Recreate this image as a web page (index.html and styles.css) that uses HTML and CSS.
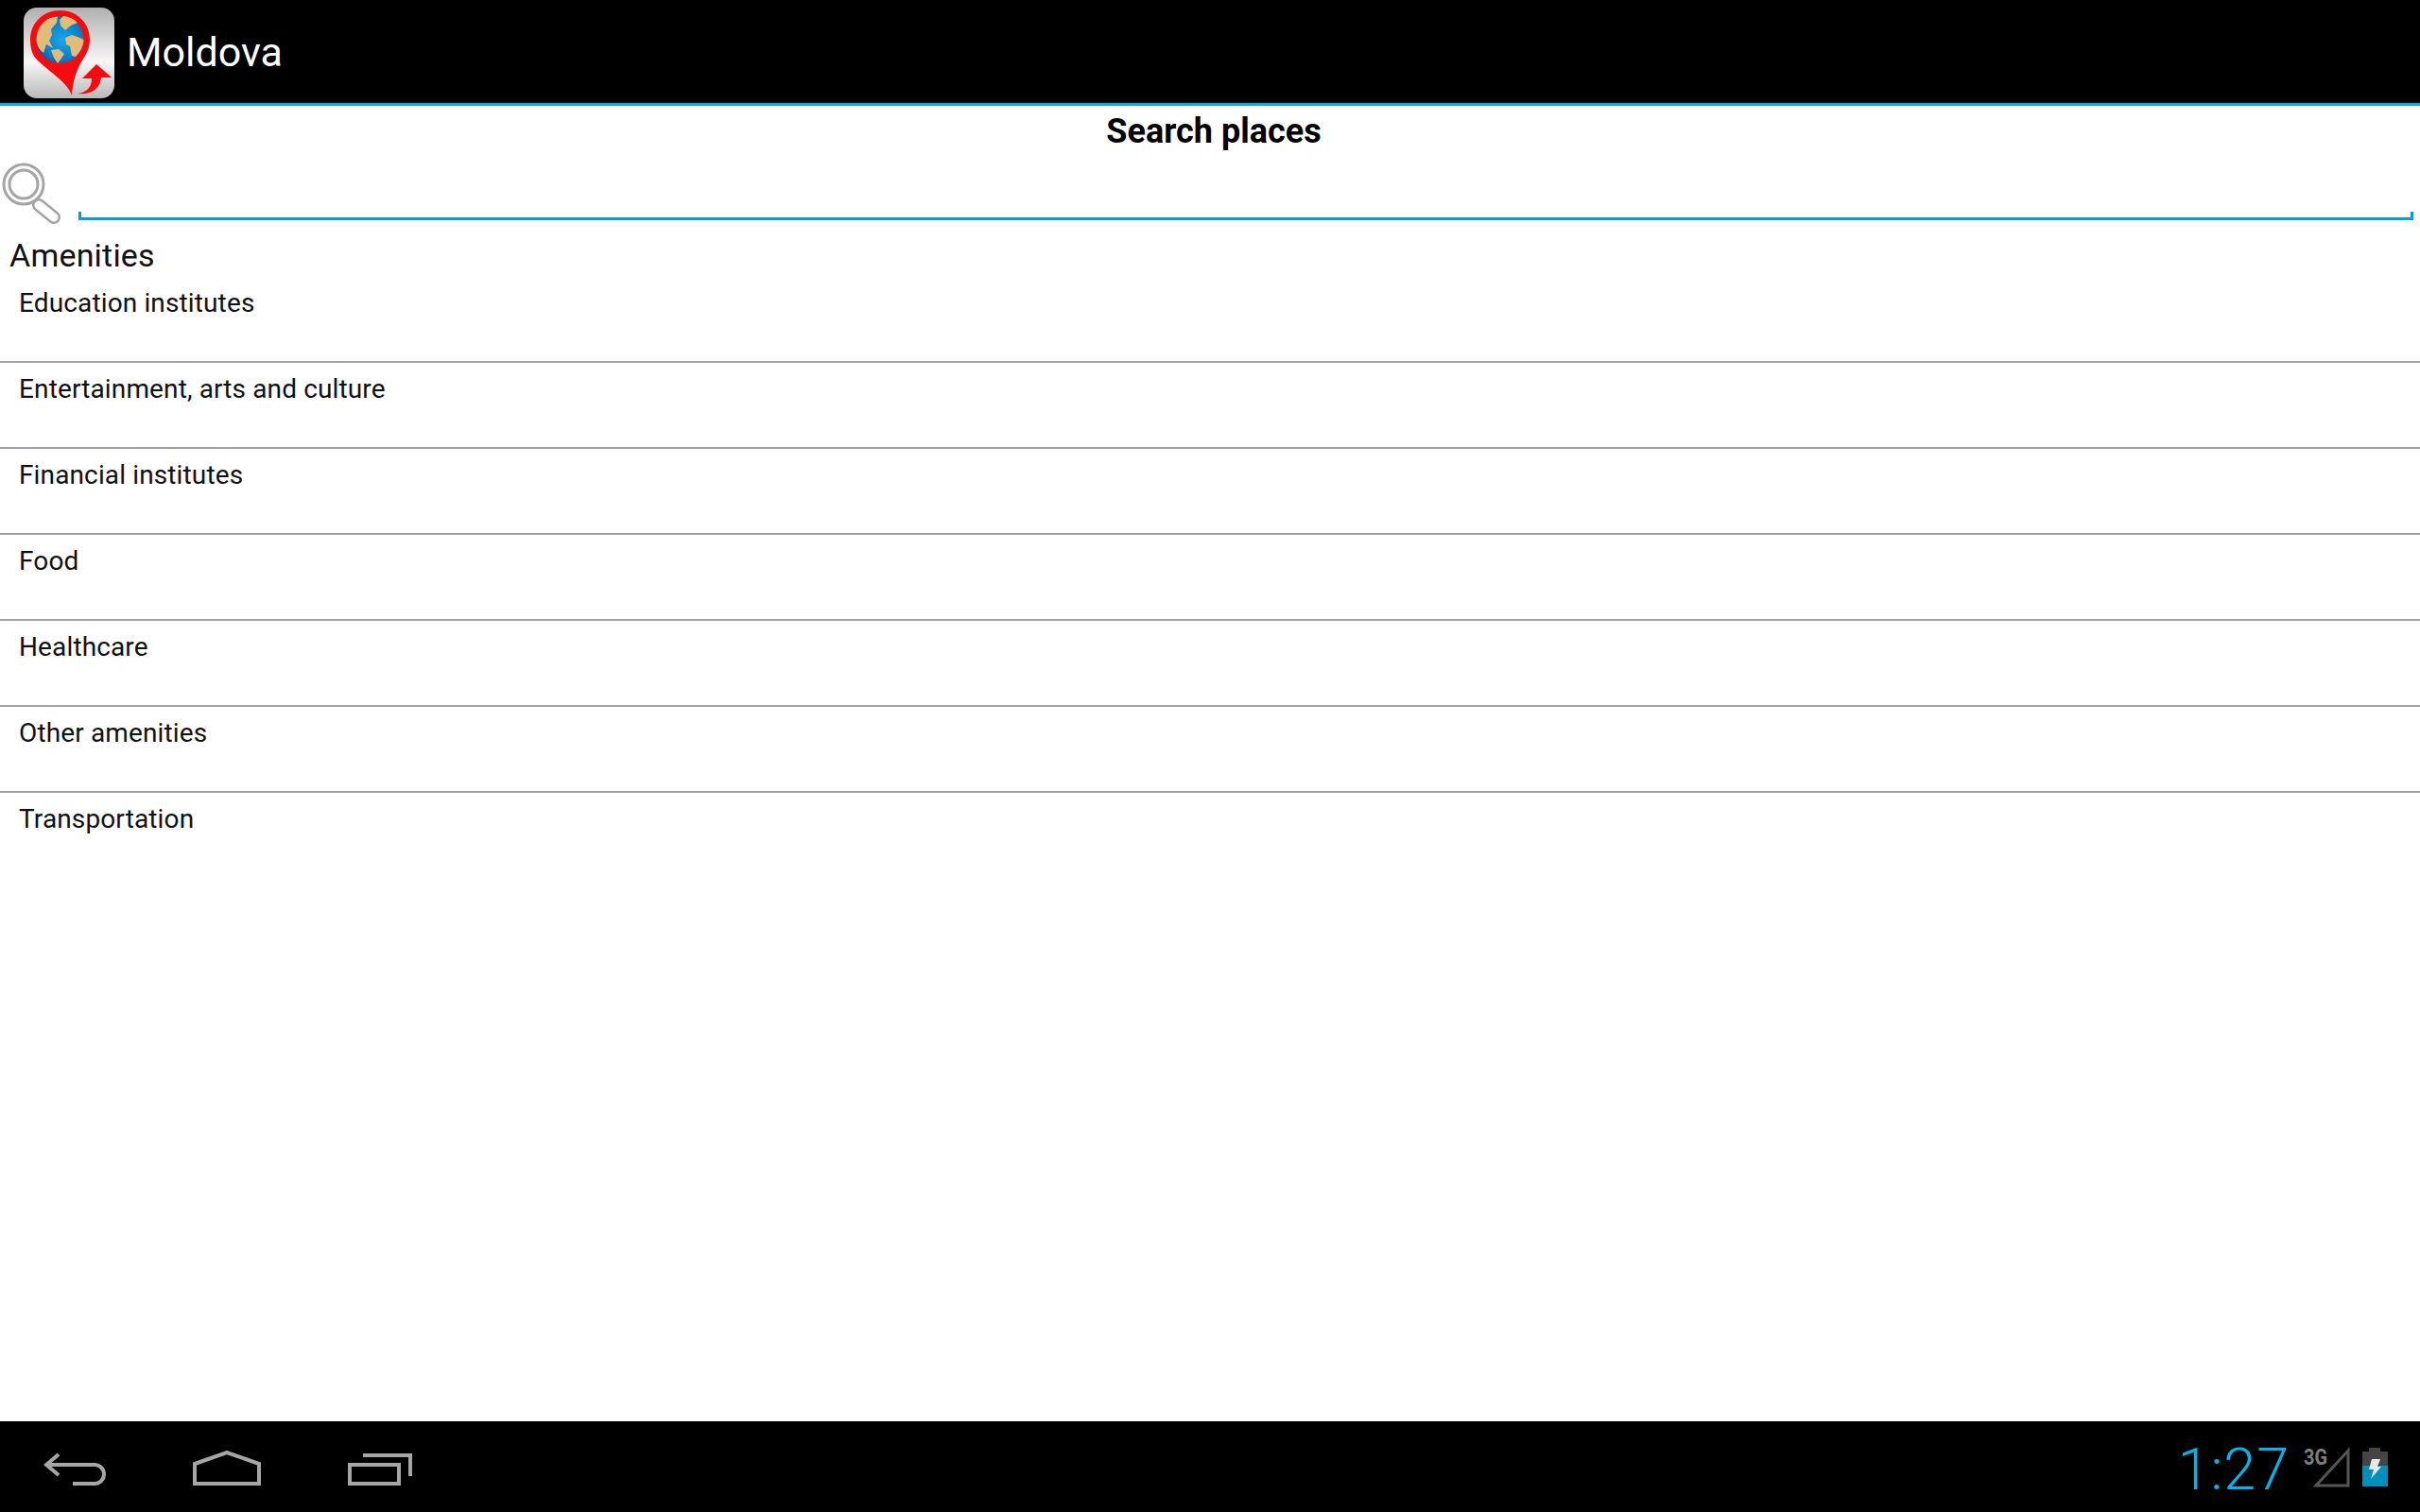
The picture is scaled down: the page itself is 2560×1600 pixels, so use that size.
FILE: index.html
```html
<!DOCTYPE html>
<html lang="en">
<head>
<meta charset="utf-8">
<title>Moldova</title>
<link rel="stylesheet" href="styles.css">
</head>
<body>
<div class="screen">
  <header class="action-bar">
    <svg class="app-icon" viewBox="0 0 96 96" width="96" height="96">
      <defs>
        <linearGradient id="tile" x1="0" y1="0" x2="0" y2="1">
          <stop offset="0" stop-color="#b0b0b0"/>
          <stop offset="0.6" stop-color="#f8f6f6"/>
          <stop offset="1" stop-color="#b9b9b9"/>
        </linearGradient>
        <radialGradient id="sea" cx="0.55" cy="0.5" r="0.6">
          <stop offset="0" stop-color="#18a8e6"/>
          <stop offset="0.7" stop-color="#0b7cc4"/>
          <stop offset="1" stop-color="#044f8e"/>
        </radialGradient>
      </defs>
      <rect x="0" y="0" width="96" height="96" rx="14" fill="url(#tile)"/>
      <path d="M51 93 C46 78 24 66 13 54 C8 48 7 40 7 34 C7 16 21 3 38.500 3 C56 3 70 16 70 34 C70 41 67 49 62 56 C56 66 52 78 51 93Z" fill="#f60c10"/>
      <circle cx="38.500" cy="34" r="25" fill="url(#sea)"/>
      <path d="M13.500 34 C13.500 24 19 15 28 11 L36 9.500 L35 16 L29 23 L30 29 L27 35 L31 43 L24 39 L21 48 C16 44 13.500 39 13.500 34Z" fill="#e3bb78"/>
      <path d="M29 45 L37 44 L43 49 L39 55 L36 59 L32 53Z" fill="#e3bb78"/>
      <path d="M44 32 L51 29 L57 31 L63.500 34 C63.500 40 60 47 55 52 L51 51 L49 41 L45 39Z" fill="#e3bb78"/>
      <path d="M38 13 L42 9 C48 9.500 53 12 57 16 L50 19 L44 24 L39 19Z" fill="#e3bb78"/>
      <path d="M57 91 C67 90 72 84 72 75 L62 75 L77 60 L93 74 L82 74 C81 86 71 93 57 91Z" fill="#f60c10"/>
    </svg>
    <span class="app-title">Moldova</span>
  </header>
  <main class="content">
    <h1 class="page-title">Search places</h1>
    <div class="search-row">
      <svg class="search-icon" viewBox="0 0 68 68" width="68" height="68" fill="none">
        <path class="lens-handle-outer" d="M41 47 L57 60"/>
        <path class="lens-handle-inner" d="M41 47 L57 60"/>
        <circle cx="25" cy="25" r="21" fill="#fff" stroke="#a5a5a5" stroke-width="3"/>
        <circle cx="25" cy="25" r="15" stroke="#a5a5a5" stroke-width="3"/>
      </svg>
      <div class="search-field"></div>
    </div>
    <h2 class="section-title">Amenities</h2>
    <ul class="list">
      <li class="list-item">Education institutes</li>
      <li class="list-item">Entertainment, arts and culture</li>
      <li class="list-item">Financial institutes</li>
      <li class="list-item">Food</li>
      <li class="list-item">Healthcare</li>
      <li class="list-item">Other amenities</li>
      <li class="list-item">Transportation</li>
    </ul>
  </main>
  <footer class="nav-bar">
    <div class="nav-buttons">
      <svg class="nav-back" viewBox="0 0 68 36" width="68" height="36" fill="none" stroke="#a6a6a6" stroke-width="4">
        <path d="M16 2 L3 13 L16 24"/>
        <path d="M3 13 H54 A10 10 0 0 1 54 33 H31"/>
      </svg>
      <svg class="nav-home" viewBox="0 0 72 38" width="72" height="38" fill="none" stroke="#a6a6a6" stroke-width="4">
        <path d="M2 35 V14 L36 2 L70 14 V35 Z"/>
      </svg>
      <svg class="nav-recent" viewBox="0 0 68 34" width="68" height="34" fill="none" stroke="#a6a6a6" stroke-width="4">
        <rect x="2" y="12" width="52" height="20"/>
        <path d="M16 2 H66 V24"/>
      </svg>
    </div>
    <div class="status">
      <span class="clock">1:27</span>
      <svg class="signal" viewBox="0 -6 49 48" width="49" height="48">
        <path d="M13 40 L47 3 V40 Z" fill="none" stroke="#555" stroke-width="3"/>
        <text class="signal-label" x="0" y="18" textLength="25" lengthAdjust="spacingAndGlyphs">3G</text>
      </svg>
      <svg class="battery" viewBox="0 0 27 41" width="27" height="41">
        <rect x="7" y="0" width="12" height="4" fill="#444"/>
        <rect x="0" y="4" width="27" height="15" fill="#444"/>
        <rect x="0" y="19" width="27" height="22" fill="#0090bd"/>
        <path d="M10 12 L19 12 L16 20 L20 20 L9 33 L12 23 L7 23 Z" fill="#e8e8e8"/>
      </svg>
    </div>
  </footer>
</div>
</body>
</html>
```
FILE: styles.css
```css
* { box-sizing: border-box; }
html, body { margin: 0; padding: 0; }
body { font-family: Roboto, "Liberation Sans", sans-serif; background: #fff; color: #000; }
.screen { width: 2560px; height: 1600px; display: flex; flex-direction: column; overflow: hidden; }
.action-bar { height: 112px; flex: none; background: #000; border-bottom: 3px solid #00b1e6; display: flex; align-items: center; padding-left: 25px; gap: 13px; }
.app-icon { display: block; flex: none; margin-top: 2px; }
.app-title { color: #fff; font-size: 43px; line-height: 52px; }
.content { flex: 1; min-height: 0; background: #fff; }
.page-title { margin: 0; height: 50px; padding-left: 8px; font-size: 36px; font-weight: 700; line-height: 55px; text-align: center; }
.search-row { display: flex; height: 71px; padding-right: 7px; }
.search-icon { flex: none; display: block; margin: 8px 15px 0 0; }
.lens-handle-outer { stroke: #a5a5a5; stroke-width: 14; stroke-linecap: round; }
.lens-handle-inner { stroke: #fff; stroke-width: 9; stroke-linecap: round; }
.search-field { flex: 1; height: 9px; align-self: flex-end; border: 3px solid #009fd4; border-top: 0; }
.section-title { margin: 0; height: 60px; padding: 15px 0 0 10px; font-size: 34px; font-weight: 400; line-height: 44px; letter-spacing: 0.2px; color: #111; }
.list { list-style: none; margin: 0; padding: 0; }
.list-item { height: 91px; padding: 8px 0 0 20px; font-size: 28px; line-height: 40px; letter-spacing: 0.13px; border-bottom: 2px solid #a0a0a0; color: #111; }
.list-item:last-child { border-bottom: 0; }
.nav-bar { height: 96px; flex: none; background: #000; display: flex; justify-content: space-between; padding: 0 34px 0 46px; }
.nav-buttons { display: flex; align-items: flex-start; gap: 90px; padding-top: 31px; }
.nav-back { margin-top: 2px; }
.nav-recent { margin: 3px 0 0 2px; }
.status { display: flex; align-items: flex-start; padding-top: 28px; }
.clock { color: #00b5ec; font-size: 61px; font-weight: 300; line-height: 70px; letter-spacing: 1px; margin: -12px 15px 0 0; }
.signal { margin: -6px 13px 0 0; }
.signal-label { fill: #7d7d7d; font-size: 23px; font-weight: 700; }
```
